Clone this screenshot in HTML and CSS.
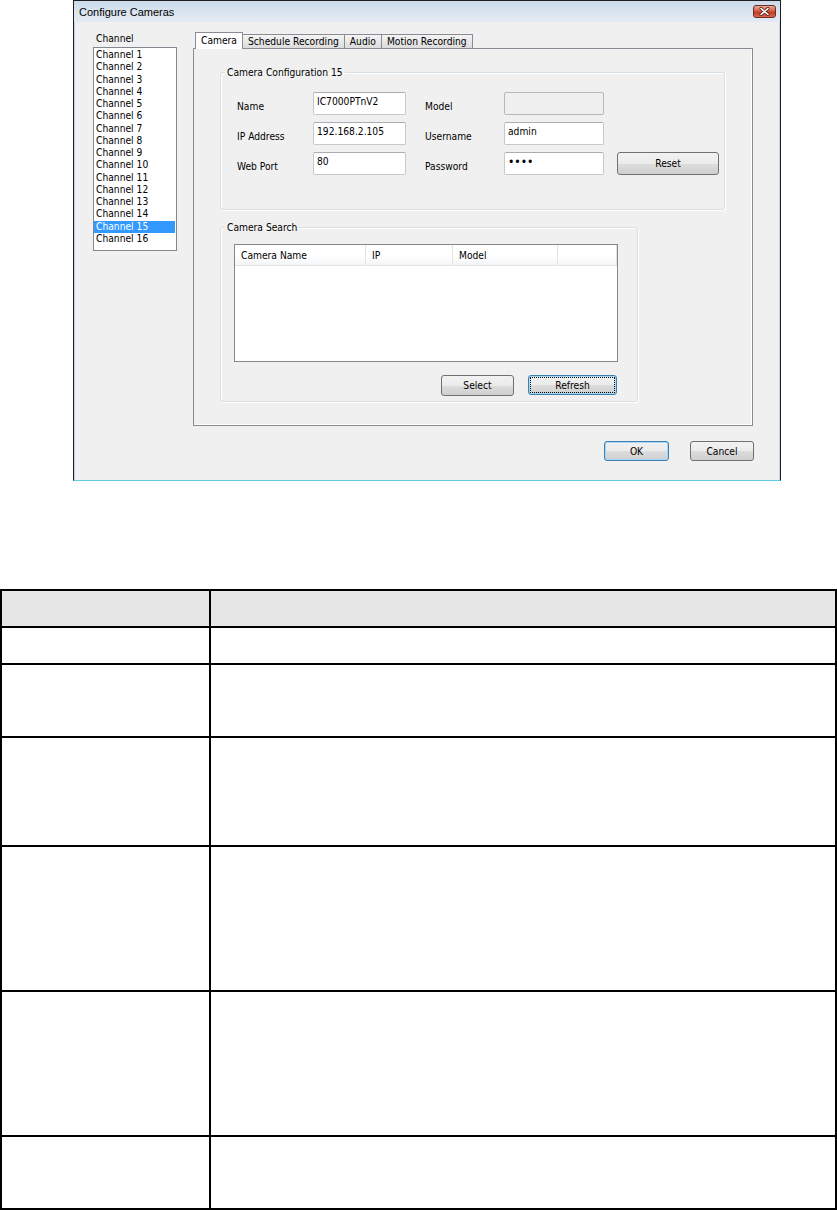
FILE: index.html
```html
<!DOCTYPE html>
<html lang="en">
<head>
    <meta charset="UTF-8">
    <meta name="viewport" content="width=device-width, initial-scale=1.0">
    <title>Configure Cameras</title>
    <link rel="stylesheet" href="styles.css">
</head>
<body>
    <div class="dialog">
        <div class="titlebar">
            <span class="title">Configure Cameras</span>
            <span class="close-btn">
                <svg width="11" height="9" viewBox="0 0 11 9">
                    <path d="M2 1.5 L9 7.5 M9 1.5 L2 7.5" stroke="#5a1a12" stroke-width="3" stroke-linecap="round"/>
                    <path d="M2 1.5 L9 7.5 M9 1.5 L2 7.5" stroke="#fff" stroke-width="1.6" stroke-linecap="round"/>
                </svg>
            </span>
        </div>

        <div class="dialog-body">
            <div class="channels">
                <div class="channels-label">Channel</div>
                <ul class="channel-list">
                    <li>Channel 1</li>
                    <li>Channel 2</li>
                    <li>Channel 3</li>
                    <li>Channel 4</li>
                    <li>Channel 5</li>
                    <li>Channel 6</li>
                    <li>Channel 7</li>
                    <li>Channel 8</li>
                    <li>Channel 9</li>
                    <li>Channel 10</li>
                    <li>Channel 11</li>
                    <li>Channel 12</li>
                    <li>Channel 13</li>
                    <li>Channel 14</li>
                    <li class="selected">Channel 15</li>
                    <li>Channel 16</li>
                </ul>
            </div>

            <div class="tabs">
                <div class="tab-strip">
                    <div class="tab active">Camera</div>
                    <div class="tab">Schedule Recording</div>
                    <div class="tab">Audio</div>
                    <div class="tab">Motion Recording</div>
                </div>
                <div class="tab-panel">
                    <fieldset class="group group-config">
                        <legend>Camera Configuration 15</legend>
                        <div class="config-body">
                            <div class="fields">
                                <label class="field-label" for="cam-name">Name</label>
                                <input class="field-input" id="cam-name" type="text" value="IC7000PTnV2">
                                <label class="field-label" for="cam-model">Model</label>
                                <input class="field-input wide disabled" id="cam-model" type="text" value="" disabled>

                                <label class="field-label" for="cam-ip">IP Address</label>
                                <input class="field-input" id="cam-ip" type="text" value="192.168.2.105">
                                <label class="field-label" for="cam-user">Username</label>
                                <input class="field-input wide" id="cam-user" type="text" value="admin">

                                <label class="field-label" for="cam-port">Web Port</label>
                                <input class="field-input" id="cam-port" type="text" value="80">
                                <label class="field-label" for="cam-pass">Password</label>
                                <input class="field-input wide password" id="cam-pass" type="password" value="1234">
                            </div>
                            <button class="btn reset-btn">Reset</button>
                        </div>
                    </fieldset>

                    <fieldset class="group group-search">
                        <legend>Camera Search</legend>
                        <div class="search-body">
                            <div class="listview">
                                <div class="lv-header">
                                    <span class="lv-col col-name">Camera Name</span>
                                    <span class="lv-col col-ip">IP</span>
                                    <span class="lv-col col-model">Model</span>
                                    <span class="lv-col col-rest"></span>
                                </div>
                            </div>
                            <div class="search-buttons">
                                <button class="btn select-btn">Select</button>
                                <button class="btn refresh-btn focused">Refresh</button>
                            </div>
                        </div>
                    </fieldset>
                </div>
            </div>
        </div>

        <div class="dialog-buttons">
            <button class="btn ok-btn default">OK</button>
            <button class="btn cancel-btn">Cancel</button>
        </div>
    </div>

    <table class="desc">
        <colgroup>
            <col class="desc-key">
            <col class="desc-val">
        </colgroup>
        <tr class="head row-1"><td></td><td></td></tr>
        <tr class="row-1"><td></td><td></td></tr>
        <tr class="row-2"><td></td><td></td></tr>
        <tr class="row-3"><td></td><td></td></tr>
        <tr class="row-4"><td></td><td></td></tr>
        <tr class="row-4"><td></td><td></td></tr>
        <tr class="row-2"><td></td><td></td></tr>
    </table>
</body>
</html>
```

FILE: styles.css
```css
body {
    margin: 0;
    background: #fff;
    font-family: "DejaVu Sans Condensed", "Liberation Sans", sans-serif;
    font-size: 10.2px;
    color: #000;
}

/* window */
.dialog {
    width: 708px;
    box-sizing: border-box;
    margin-left: 73px;
    border: 1px solid #1e1e1e;
    border-bottom-color: #5fcbe6;
    background: #f0f0f0;
    box-shadow: inset 1px 0 #b9d3ec, inset -1px 0 #b9d3ec;
}
.titlebar {
    height: 21px;
    display: flex;
    align-items: center;
    justify-content: space-between;
    padding: 0 4px 0 5px;
    background: linear-gradient(#cad9ea, #dbe5f1 55%, #e3eaf3);
    font-family: "Liberation Sans", sans-serif;
    font-size: 11px;
}
.close-btn {
    width: 23px;
    height: 13px;
    box-sizing: border-box;
    display: flex;
    align-items: center;
    justify-content: center;
    border: 1px solid #6b2c25;
    border-radius: 3px;
    background: linear-gradient(#eaa89a, #d5604a 45%, #c23a20 55%, #d86a50);
}

.dialog-body {
    display: flex;
    align-items: flex-start;
    padding: 10px 26px 0 19px;
}

/* channel list */
.channels {
    width: 84px;
    margin-right: 16px;
}
.channels-label {
    line-height: 14px;
    margin: 0 0 1px 3px;
}
.channel-list {
    list-style: none;
    margin: 0;
    padding: 1px 0 0;
    height: 204px;
    box-sizing: border-box;
    border: 1px solid #828790;
    background: #fff;
}
.channel-list li {
    height: 12.25px;
    line-height: 12.25px;
    padding-left: 2px;
    white-space: nowrap;
}
.channel-list li.selected {
    background: #3399ff;
    color: #fff;
    margin-right: 1px;
}

/* tabs */
.tabs {
    width: 560px;
}
.tab-strip {
    display: flex;
    align-items: flex-end;
    height: 16px;
    padding-left: 2px;
}
.tab {
    height: 13px;
    line-height: 13px;
    padding: 0 5px;
    margin-right: -1px;
    border: 1px solid #898c95;
    border-bottom: none;
    background: linear-gradient(#f4f4f4, #e8e8e8 50%, #dcdcdc);
    white-space: nowrap;
}
.tab.active {
    position: relative;
    z-index: 1;
    height: 16px;
    line-height: 16px;
    margin-bottom: -1px;
    background: #fff;
}
.tab-panel {
    height: 378px;
    box-sizing: border-box;
    border: 1px solid #898c95;
    padding: 17px 26px 0 26px;
    box-shadow: inset -1px -1px #fff;
}

/* group boxes */
.group {
    margin: 0;
    padding: 0;
    border: 1px solid #d5dfe5;
    border-radius: 3px;
    box-shadow: inset 1px 1px #fff, 1px 1px #fff;
}
.group legend {
    margin-left: 4px;
    padding: 0 2px;
    line-height: 13px;
}
.group-config {
    width: 505px;
    box-sizing: border-box;
}
.config-body {
    display: flex;
    align-items: flex-end;
    padding: 13px 0 34px 16px;
}
.fields {
    display: grid;
    grid-template-columns: 76px 112px 79px 100px;
    grid-auto-rows: 23px;
    row-gap: 7px;
}
.field-label {
    padding-top: 8px;
    line-height: 13px;
}
.field-input {
    width: 93px;
    height: 23px;
    box-sizing: border-box;
    margin: 0;
    padding: 0 3px 5px;
    border: 1px solid #c5c8cc;
    border-top-color: #abadb3;
    border-radius: 2px;
    background: #fff;
    font: inherit;
    color: #000;
    outline: none;
}
.field-input.wide {
    width: 100px;
}
.field-input.disabled {
    background: #f0f0f0;
    border-color: #b5b8bc;
}
.field-input.password {
    font-size: 12px;
    padding-bottom: 4px;
}

.group-search {
    width: 418px;
    box-sizing: border-box;
    margin-top: 11px;
}
.search-body {
    padding: 10px 0 5px 13px;
}
.listview {
    width: 384px;
    height: 118px;
    box-sizing: border-box;
    border: 1px solid #828790;
    background: #fff;
}
.lv-header {
    display: flex;
    height: 20px;
    border-bottom: 1px solid #e2e3e5;
    background: linear-gradient(#fff 50%, #f4f5f7);
}
.lv-col {
    box-sizing: border-box;
    padding: 2px 0 0 6px;
    line-height: 18px;
    border-right: 1px solid #e2e3e5;
}
.col-name { width: 131px; }
.col-ip { width: 87px; }
.col-model { width: 105px; }
.col-rest { width: 59px; }

.search-buttons {
    display: flex;
    justify-content: flex-end;
    gap: 14px;
    width: 384px;
    padding-right: 1px;
    box-sizing: border-box;
    margin-top: 13px;
}

/* buttons */
.btn {
    height: 21px;
    box-sizing: border-box;
    margin: 0;
    padding: 0;
    border: 1px solid #707070;
    border-radius: 3px;
    background: linear-gradient(#f2f2f2, #ebebeb 50%, #dddddd 51%, #cfcfcf);
    font: inherit;
    color: #000;
}
.reset-btn {
    width: 102px;
    height: 23px;
    margin-left: 13px;
}
.select-btn { width: 73px; }
.refresh-btn { width: 89px; height: 20px; }
.btn.default,
.btn.focused {
    border-color: #3c7fb1;
    box-shadow: inset 0 0 0 1px #a7d8f5;
}
.btn.focused {
    outline: 1px dotted #000;
    outline-offset: -3px;
}

.dialog-buttons {
    display: flex;
    justify-content: flex-end;
    gap: 21px;
    padding: 15px 26px 19px 0;
}
.ok-btn { width: 65px; height: 20px; }
.cancel-btn { width: 64px; height: 20px; }

/* description table */
.desc {
    width: 837px;
    margin-top: 108px;
    border-collapse: collapse;
    table-layout: fixed;
}
.desc-key { width: 209px; }
.desc td {
    border: 2px solid #000;
    padding: 0;
}
.desc .head td {
    background: #e6e6e6;
}
.row-1 { height: 37px; }
.row-2 { height: 73px; }
.row-3 { height: 109px; }
.row-4 { height: 145px; }
```
